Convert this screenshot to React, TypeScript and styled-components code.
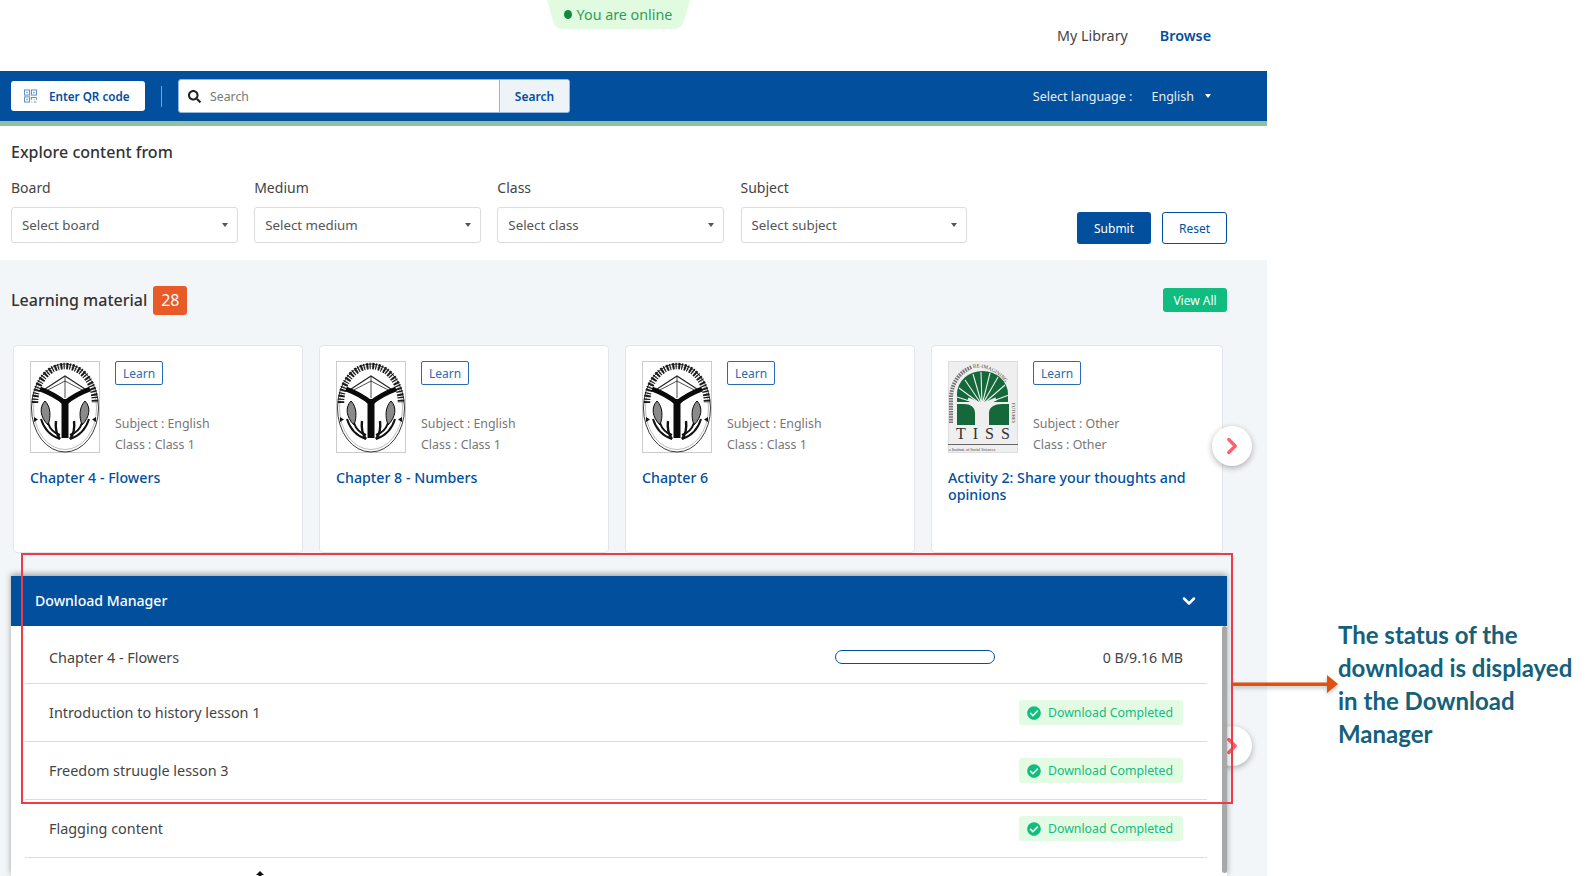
import React from 'react';
import styled, { createGlobalStyle } from 'styled-components';
import { ChevronDown, ChevronRight } from 'lucide-react';
import { FaCheckCircle, FaSearch } from 'react-icons/fa';

const BLUE = '#024f9d';
const GREEN = '#10bc80';
const FONT = '"Noto Sans", "Open Sans", sans-serif';

const GlobalStyle = createGlobalStyle`
  html, body {
    margin: 0;
    height: 876px;
    overflow: hidden;
    background: #fff;
    font-family: ${FONT};
    color: #333;
  }
  * { box-sizing: border-box; }
`;

const UpEmblem: React.FC = () => (
  <svg width="70" height="92" viewBox="0 0 70 92">
    <rect x="0.5" y="0.5" width="69" height="91" fill="#fff" stroke="#ccc" />
    <ellipse cx="35" cy="47" rx="33.5" ry="44" fill="none" stroke="#222" strokeWidth="0.9" />
    <ellipse cx="35" cy="47" rx="31.5" ry="41.5" fill="none" stroke="#555" strokeWidth="0.4" />
    {/* lettering band round the top of the seal */}
    <path
      d="M5 42 A30 37 0 0 1 65 42"
      fill="none"
      stroke="#1a1a1a"
      strokeWidth="6.5"
      strokeDasharray="2 1.2 1.2 1.6"
    />
    <path d="M12 30 L35 15 L58 30" fill="none" stroke="#222" strokeWidth="1.1" />
    <path d="M14 31 L35 20 L56 31 M35 15 V37" fill="none" stroke="#222" strokeWidth="0.8" />
    <path d="M10 28 C18 31 28 36 35 42 C42 36 52 31 60 28" fill="none" stroke="#0a0a0a" strokeWidth="5" />
    <path d="M35 38 V77" fill="none" stroke="#0a0a0a" strokeWidth="7" />
    <path d="M15 40 C9 46 10 56 18 64 C21 56 21 46 15 40 Z" fill="#8a8a8a" stroke="#0a0a0a" strokeWidth="1" />
    <path d="M55 40 C61 46 60 56 52 64 C49 56 49 46 55 40 Z" fill="#8a8a8a" stroke="#0a0a0a" strokeWidth="1" />
    <path
      d="M11 58 C14 68 21 75 30 78 M18 62 C20 68 24 72 30 74 M59 58 C56 68 49 75 40 78 M52 62 C50 68 46 72 40 74"
      fill="none"
      stroke="#111"
      strokeWidth="2"
    />
    <path d="M26 60 C25 68 27 74 30 78 M44 60 C45 68 43 74 40 78" fill="none" stroke="#111" strokeWidth="2.4" />
    <path d="M4 56 L8 58.5 L4 61 Z M66 56 L62 58.5 L66 61 Z" fill="#111" />
  </svg>
);

const TissEmblem: React.FC = () => (
  <svg width="70" height="92" viewBox="0 0 70 92">
    <rect x="0.5" y="0.5" width="69" height="91" fill="#efefef" stroke="#ddd" />
    <defs>
      <path id="tissRing" d="M25 7 C44 4 62 20 65 40" />
    </defs>
    <path d="M3 62 L3 36 A31 33 0 0 1 24 6" fill="none" stroke="#777" strokeWidth="4" strokeDasharray="1.6 1" />
    <RingText>
      <textPath href="#tissRing">RE-IMAGINING</textPath>
    </RingText>
    <VerticalRingText x="0" y="0" transform="translate(63.5 42) rotate(90)">
      FUTURES
    </VerticalRingText>
    {/* tree crown: a solid dome cut by pale rays */}
    <path d="M9 41 V33 A25.5 23 0 0 1 60 33 V41 Z" fill="#14683a" />
    <path
      d="M34 44 L9 36 M34 44 L11 27 M34 44 L17 19 M34 44 L25 13 M34 44 L33 11 M34 44 L42 12 M34 44 L50 16 M34 44 L57 24 M34 44 L61 34"
      fill="none"
      stroke="#efefef"
      strokeWidth="1.1"
    />
    <path d="M34 44 L20 38 M34 44 L48 38" stroke="#efefef" strokeWidth="3" />
    <path d="M9 43 V64 H27 V52 C27 46 22 43 16 43 Z M61 43 V64 H41 V52 C41 46 47 43 54 43 Z" fill="#14683a" />
    <Letters x="8" y="78">
      TISS
    </Letters>
    <rect x="0" y="83" width="70" height="0.8" fill="#444" />
    <FootText x="1" y="90">
      a Institute of Social Sciences
    </FootText>
  </svg>
);

const RingText = styled.text`
  font-family: 'Liberation Serif', serif;
  font-size: 5.2px;
  fill: #444;
`;
const VerticalRingText = styled.text`
  font-family: 'Liberation Serif', serif;
  font-size: 4.6px;
  fill: #444;
`;
const Letters = styled.text`
  font-family: 'Liberation Serif', serif;
  font-size: 16px;
  letter-spacing: 7px;
  fill: #333;
`;
const FootText = styled.text`
  font-family: 'Liberation Serif', serif;
  font-size: 4px;
  fill: #444;
`;

const QrIcon: React.FC = () => (
  <svg width="13" height="14" viewBox="0 0 14 14" fill="none" stroke="#5f8fc4" strokeWidth="1.1">
    <rect x="0.5" y="0.5" width="5.5" height="5.5" />
    <rect x="8" y="0.5" width="5.5" height="5.5" />
    <rect x="0.5" y="8" width="5.5" height="5.5" />
    <path d="M2.5 2.5h1.5v1.5H2.5z M10 2.5h1.5v1.5H10z M2.5 10h1.5v1.5H2.5z" fill="#5f8fc4" stroke="none" />
    <path d="M8 8.5h5.5M8 8v3M10.5 11h1M8 13.5h1M11 13.5h2.5M13.5 9v2" />
  </svg>
);

const filters = [
  { label: 'Board', placeholder: 'Select board' },
  { label: 'Medium', placeholder: 'Select medium' },
  { label: 'Class', placeholder: 'Select class' },
  { label: 'Subject', placeholder: 'Select subject' },
];

const cards = [
  { title: 'Chapter 4 - Flowers', subject: 'English', klass: 'Class 1', logo: 'up' },
  { title: 'Chapter 8 - Numbers', subject: 'English', klass: 'Class 1', logo: 'up' },
  { title: 'Chapter 6', subject: 'English', klass: 'Class 1', logo: 'up' },
  { title: 'Activity 2: Share your thoughts and opinions', subject: 'Other', klass: 'Other', logo: 'tiss' },
];

const downloads = [
  { name: 'Chapter 4 - Flowers', done: false },
  { name: 'Introduction to history lesson 1', done: true },
  { name: 'Freedom struugle lesson 3', done: true },
  { name: 'Flagging content', done: true },
];

const App: React.FC = () => {
  return (
    <>
      <GlobalStyle />
      <Page>
        <OnlinePill>
          <OnlineDot />
          You are online
        </OnlinePill>
        <TopNav>
          <TopLink>My Library</TopLink>
          <TopLink active>Browse</TopLink>
        </TopNav>
        <SearchBar>
          <QrButton>
            <QrIcon />
            Enter QR code
          </QrButton>
          <Divider />
          <SearchGroup>
            <SearchField>
              <FaSearch size={13} color="#222" />
              Search
            </SearchField>
            <SearchButton>Search</SearchButton>
          </SearchGroup>
          <Language>
            Select language :<LanguageValue>English</LanguageValue>
            <Caret light />
          </Language>
        </SearchBar>
        <Explore>
          <ExploreTitle>Explore content from</ExploreTitle>
          <FilterRow>
            {filters.map((f) => (
              <Filter key={f.label}>
                <FilterLabel>{f.label}</FilterLabel>
                <SelectBox>
                  {f.placeholder}
                  <Caret />
                </SelectBox>
              </Filter>
            ))}
            <SubmitButton>Submit</SubmitButton>
            <ResetButton>Reset</ResetButton>
          </FilterRow>
        </Explore>
        <Learning>
          <SectionHead>
            <SectionTitle>Learning material</SectionTitle>
            <Count>28</Count>
            <ViewAll>View All</ViewAll>
          </SectionHead>
          <Carousel>
            {cards.map((c) => (
              <Card key={c.title}>
                <CardTop>
                  {c.logo === 'up' ? <UpEmblem /> : <TissEmblem />}
                  <CardMeta>
                    <LearnTag>Learn</LearnTag>
                    <MetaLine>Subject : {c.subject}</MetaLine>
                    <MetaLine>Class : {c.klass}</MetaLine>
                  </CardMeta>
                </CardTop>
                <CardTitle>{c.title}</CardTitle>
              </Card>
            ))}
            <NextButton>
              <ChevronRight size={26} color="#ff5f6d" strokeWidth={3} />
            </NextButton>
          </Carousel>
          <Carousel>
            <NextButton>
              <ChevronRight size={26} color="#ff5f6d" strokeWidth={3} />
            </NextButton>
          </Carousel>
        </Learning>
        <DownloadManager>
          <ManagerHead>
            Download Manager
            <ChevronDown size={20} color="#fff" strokeWidth={3} />
          </ManagerHead>
          <ManagerBody>
            {downloads.map((d) => (
              <DownloadRow key={d.name}>
                {d.name}
                {d.done ? (
                  <DoneBadge>
                    <FaCheckCircle size={14} color={GREEN} />
                    Download Completed
                  </DoneBadge>
                ) : (
                  <Progress>
                    <ProgressBar />
                    <span>0 B/9.16 MB</span>
                  </Progress>
                )}
              </DownloadRow>
            ))}
            <Scrollbar />
          </ManagerBody>
        </DownloadManager>
        <Highlight />
        <CalloutArrow width="106" height="24" viewBox="0 0 106 24">
          <path d="M0 10.5 H94 V3 L105 12 L94 21 V14 H0 Z" fill="#e0510f" />
        </CalloutArrow>
        <CalloutText>
          The status of the
          <br />
          download is displayed
          <br />
          in the Download
          <br />
          Manager
        </CalloutText>
        <Cursor width="12" height="8" viewBox="0 0 12 8">
          <path d="M6 0 L10 4 H7.5 V8 H4.5 V4 H2 Z" fill="#111" />
        </Cursor>
      </Page>
    </>
  );
};

const Page = styled.div`
  position: relative;
  width: 1591px;
  height: 876px;
  overflow: hidden;
`;
const OnlinePill = styled.div`
  position: absolute;
  top: 0;
  left: 547px;
  width: 143px;
  height: 29px;
  display: flex;
  align-items: center;
  justify-content: center;
  gap: 5px;
  padding-right: 1px;
  font-size: 14.3px;
  color: #2e9e5b;
  background: #e1fbe1;
  clip-path: path('M0 0 H143 L137 21 Q135 29 127 29 H16 Q8 29 6 21 Z');
`;
const OnlineDot = styled.span`
  width: 8px;
  height: 9px;
  border-radius: 50%;
  background: #128a3e;
`;
const TopNav = styled.nav`
  width: 1267px;
  height: 71px;
  display: flex;
  justify-content: flex-end;
  align-items: center;
  gap: 32px;
  padding-right: 56px;
`;
const TopLink = styled.a<{ active?: boolean }>`
  font-size: 14.3px;
  font-weight: ${(p) => (p.active ? 600 : 400)};
  color: ${(p) => (p.active ? BLUE : '#444')};
`;
const SearchBar = styled.div`
  width: 1267px;
  height: 55px;
  display: flex;
  align-items: center;
  padding: 0 56px 0 11px;
  background: ${BLUE};
  border-bottom: 5px solid #8fc1a0;
`;
const QrButton = styled.button`
  width: 134px;
  height: 30px;
  display: flex;
  align-items: center;
  gap: 12px;
  padding: 0 0 0 13px;
  border: 0;
  border-radius: 3px;
  background: #fff;
  font-family: ${FONT};
  font-size: 11.7px;
  font-weight: 600;
  color: ${BLUE};
`;
const Divider = styled.span`
  width: 1px;
  height: 21px;
  margin: 0 16px 0 16px;
  background: #7ba4cf;
`;
const SearchGroup = styled.div`
  width: 392px;
  height: 34px;
  display: flex;
  border: 1px solid #8fb8e2;
  border-radius: 3px;
  overflow: hidden;
  background: #fff;
`;
const SearchField = styled.div`
  flex: 1;
  display: flex;
  align-items: center;
  gap: 9px;
  padding-left: 9px;
  font-size: 12.3px;
  color: #777;
`;
const SearchButton = styled.div`
  width: 70px;
  display: flex;
  align-items: center;
  justify-content: center;
  border-left: 1px solid #8fb8e2;
  background: #eef3f8;
  font-size: 12px;
  font-weight: 600;
  color: ${BLUE};
`;
const Language = styled.div`
  margin-left: auto;
  display: flex;
  align-items: center;
  font-size: 12.5px;
  color: #e8eef6;
`;
const LanguageValue = styled.span`
  margin-left: 19px;
  margin-right: 11px;
`;
const Caret = styled.span<{ light?: boolean }>`
  display: block;
  width: 0;
  height: 0;
  border-left: 3.5px solid transparent;
  border-right: 3.5px solid transparent;
  border-top: 4px solid ${(p) => (p.light ? '#fff' : '#555')};
`;
const Explore = styled.section`
  width: 1267px;
  height: 134px;
  padding: 16px 40px 0 11px;
  background: #fff;
`;
const ExploreTitle = styled.h2`
  margin: 0;
  font-size: 16px;
  line-height: 21px;
  font-weight: 500;
  color: #333;
`;
const FilterRow = styled.div`
  display: flex;
  align-items: flex-end;
  gap: 16.4px;
  margin-top: 15px;
`;
const Filter = styled.div`
  width: 227px;
`;
const FilterLabel = styled.div`
  font-size: 14px;
  line-height: 19px;
  color: #444;
`;
const SelectBox = styled.div`
  height: 36px;
  margin-top: 10px;
  display: flex;
  align-items: center;
  justify-content: space-between;
  padding: 0 9px 0 10px;
  border: 1px solid #dcdcdc;
  border-radius: 3px;
  font-size: 13.3px;
  color: #555;
`;
const SubmitButton = styled.button`
  width: 74px;
  height: 32px;
  margin: 0 0 -1px 93.4px;
  border: 0;
  border-radius: 3px;
  background: ${BLUE};
  font-family: ${FONT};
  font-size: 12px;
  color: #fff;
`;
const ResetButton = styled.button`
  width: 65px;
  height: 32px;
  margin: 0 0 -1px -5.4px;
  border: 1px solid ${BLUE};
  border-radius: 3px;
  background: #fff;
  font-family: ${FONT};
  font-size: 12px;
  color: ${BLUE};
`;
const Learning = styled.section`
  width: 1267px;
  height: 616px;
  padding: 0 40px 0 11px;
  background: #f3f6f9;
`;
const SectionHead = styled.div`
  height: 85px;
  padding-bottom: 5px;
  display: flex;
  align-items: center;
  gap: 6px;
`;
const SectionTitle = styled.h2`
  margin: 0;
  font-size: 16px;
  font-weight: 500;
  color: #333;
`;
const Count = styled.span`
  width: 34px;
  height: 29px;
  display: flex;
  align-items: center;
  justify-content: center;
  border-radius: 3px;
  background: #e85a28;
  font-size: 16px;
  color: #fff;
`;
const ViewAll = styled.span`
  margin-left: auto;
  width: 64px;
  height: 24px;
  display: flex;
  align-items: center;
  justify-content: center;
  border-radius: 3px;
  background: ${GREEN};
  font-size: 12px;
  color: #fff;
`;
const Carousel = styled.div`
  position: relative;
  height: 208px;
  margin-bottom: 92px;
  display: flex;
  gap: 16px;
  padding-left: 2px;
`;
const Card = styled.article`
  width: 290px;
  height: 208px;
  padding: 15px 16px;
  border: 1px solid #e2e5e9;
  border-radius: 4px;
  background: #fff;
  &:last-of-type {
    width: 292px;
  }
`;
const CardTop = styled.div`
  display: flex;
  gap: 15px;
`;
const CardMeta = styled.div`
  display: flex;
  flex-direction: column;
`;
const LearnTag = styled.span`
  width: 48px;
  height: 24px;
  margin-bottom: 28px;
  display: flex;
  align-items: center;
  justify-content: center;
  border: 1px solid #2a6cb3;
  border-radius: 2px;
  font-size: 12px;
  color: #2a6cb3;
`;
const MetaLine = styled.span`
  font-size: 12.4px;
  line-height: 21px;
  color: #777;
`;
const CardTitle = styled.h3`
  margin: 14px 0 0;
  font-size: 14.2px;
  line-height: 17px;
  font-weight: 500;
  color: ${BLUE};
`;
const NextButton = styled.button`
  position: absolute;
  top: 81px;
  left: 1201px;
  width: 40px;
  height: 40px;
  display: flex;
  align-items: center;
  justify-content: center;
  padding: 0;
  border: 0;
  border-radius: 50%;
  background: #fff;
  box-shadow: 0 2px 6px rgba(0, 0, 0, 0.3);
`;
const DownloadManager = styled.aside`
  position: absolute;
  top: 576px;
  left: 11px;
  bottom: 0;
  width: 1216px;
  display: flex;
  flex-direction: column;
  background: #fff;
  box-shadow: 0 -2px 6px rgba(0, 0, 0, 0.35);
`;
const ManagerHead = styled.header`
  height: 50px;
  flex-shrink: 0;
  display: flex;
  align-items: center;
  justify-content: space-between;
  padding: 0 28px 1px 24px;
  background: ${BLUE};
  font-size: 14.1px;
  font-weight: 500;
  color: #fff;
`;
const ManagerBody = styled.div`
  position: relative;
  flex: 1;
  padding: 0 20px 0 14px;
`;
const DownloadRow = styled.div`
  height: 58px;
  display: flex;
  align-items: center;
  justify-content: space-between;
  padding: 0 24px 0 24px;
  border-bottom: 1px solid #dcdcdc;
  font-size: 14.4px;
  color: #444;
  &:first-child {
    padding-top: 5px;
  }
`;
const Progress = styled.div`
  display: flex;
  align-items: center;
  font-size: 14.2px;
`;
const ProgressBar = styled.span`
  width: 160px;
  height: 14px;
  margin-right: 108px;
  border: 1px solid ${BLUE};
  border-radius: 7px;
`;
const DoneBadge = styled.span`
  width: 164px;
  height: 25px;
  display: flex;
  align-items: center;
  gap: 7px;
  padding-left: 8px;
  border-radius: 3px;
  background: #e3fbe3;
  font-size: 12.3px;
  color: ${GREEN};
`;
const Scrollbar = styled.span`
  position: absolute;
  top: 0;
  right: 0;
  bottom: 3px;
  width: 5px;
  border-radius: 3px;
  background: #a8a8a8;
`;
const Highlight = styled.div`
  position: absolute;
  top: 553px;
  left: 21px;
  width: 1212px;
  height: 251px;
  border: 2px solid #ee3b45;
`;
const CalloutArrow = styled.svg`
  position: absolute;
  top: 672px;
  left: 1233px;
  filter: drop-shadow(0 2px 2px rgba(0, 0, 0, 0.25));
`;
const CalloutText = styled.div`
  position: absolute;
  top: 618px;
  left: 1338px;
  font-family: 'Lato', sans-serif;
  font-size: 24px;
  line-height: 33px;
  font-weight: 700;
  white-space: nowrap;
  color: #15607a;
`;
const Cursor = styled.svg`
  position: absolute;
  top: 871px;
  left: 254px;
`;

export default App;
